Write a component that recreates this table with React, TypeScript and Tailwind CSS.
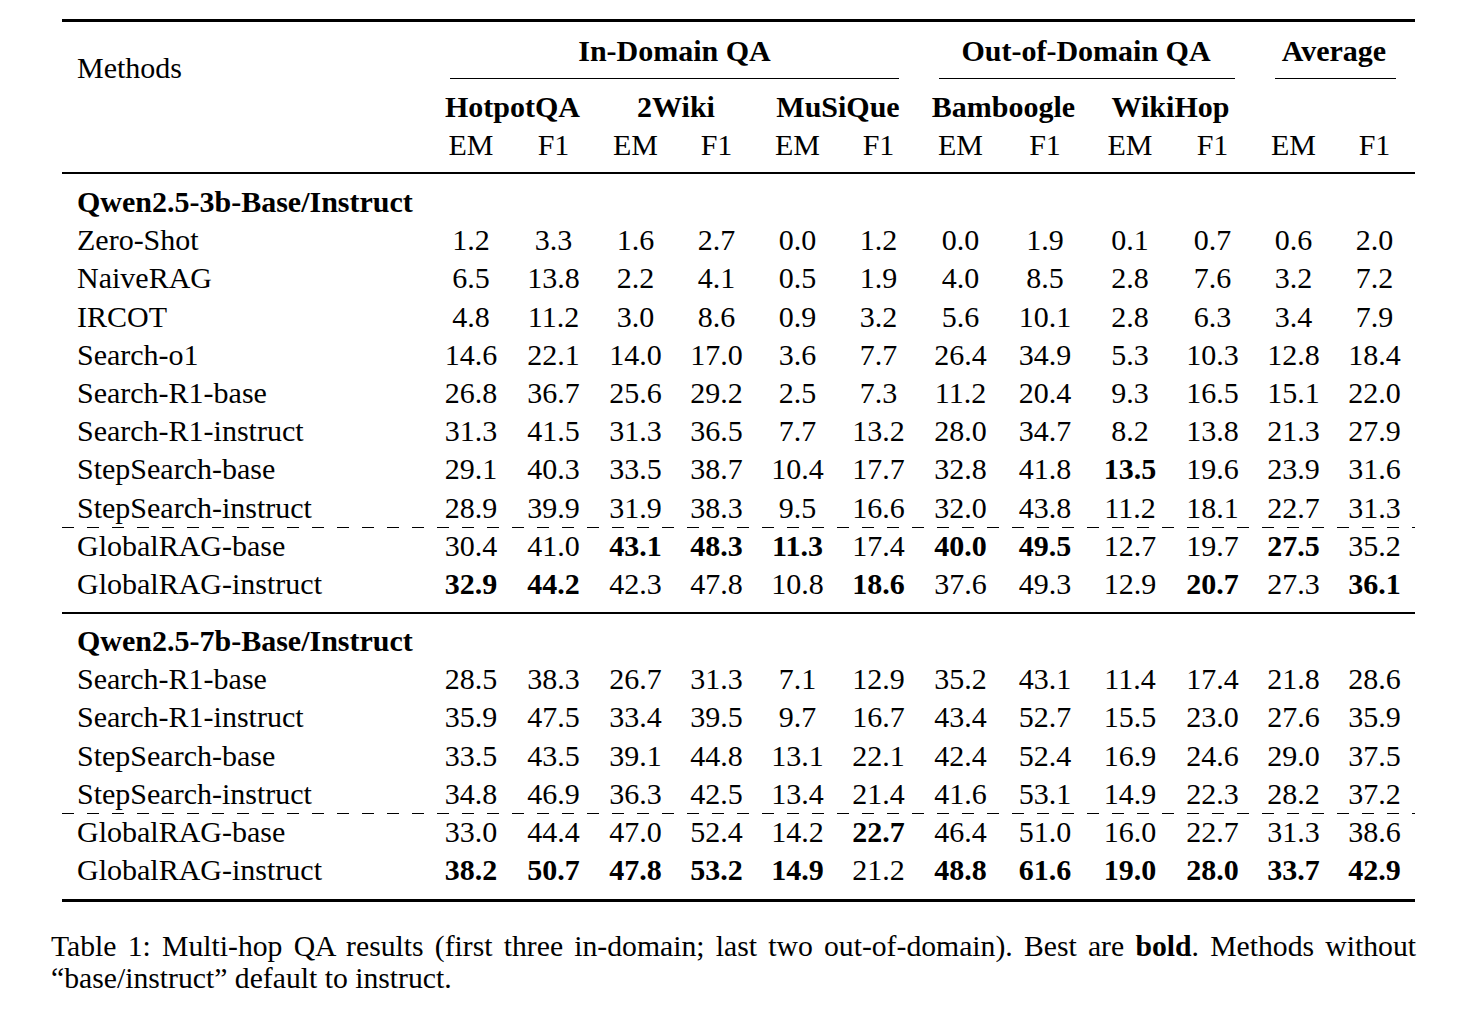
import React from 'react'

// 13 columns: method name + 12 metric columns
const COLS =
  'grid grid-cols-[368px_82px_83px_81px_81px_81px_81px_83px_86px_84px_81px_81px_81px]'

const START = [
  'col-start-2',
  'col-start-3',
  'col-start-4',
  'col-start-5',
  'col-start-6',
  'col-start-7',
  'col-start-8',
  'col-start-9',
  'col-start-10',
  'col-start-11',
  'col-start-12',
  'col-start-13',
]

type Row = { name: string; vals: string[] }

// values prefixed with * are bold
const small: Row[] = [
  { name: 'Zero-Shot', vals: ['1.2', '3.3', '1.6', '2.7', '0.0', '1.2', '0.0', '1.9', '0.1', '0.7', '0.6', '2.0'] },
  { name: 'NaiveRAG', vals: ['6.5', '13.8', '2.2', '4.1', '0.5', '1.9', '4.0', '8.5', '2.8', '7.6', '3.2', '7.2'] },
  { name: 'IRCOT', vals: ['4.8', '11.2', '3.0', '8.6', '0.9', '3.2', '5.6', '10.1', '2.8', '6.3', '3.4', '7.9'] },
  { name: 'Search-o1', vals: ['14.6', '22.1', '14.0', '17.0', '3.6', '7.7', '26.4', '34.9', '5.3', '10.3', '12.8', '18.4'] },
  { name: 'Search-R1-base', vals: ['26.8', '36.7', '25.6', '29.2', '2.5', '7.3', '11.2', '20.4', '9.3', '16.5', '15.1', '22.0'] },
  { name: 'Search-R1-instruct', vals: ['31.3', '41.5', '31.3', '36.5', '7.7', '13.2', '28.0', '34.7', '8.2', '13.8', '21.3', '27.9'] },
  { name: 'StepSearch-base', vals: ['29.1', '40.3', '33.5', '38.7', '10.4', '17.7', '32.8', '41.8', '*13.5', '19.6', '23.9', '31.6'] },
  { name: 'StepSearch-instruct', vals: ['28.9', '39.9', '31.9', '38.3', '9.5', '16.6', '32.0', '43.8', '11.2', '18.1', '22.7', '31.3'] },
]
const smallOurs: Row[] = [
  { name: 'GlobalRAG-base', vals: ['30.4', '41.0', '*43.1', '*48.3', '*11.3', '17.4', '*40.0', '*49.5', '12.7', '19.7', '*27.5', '35.2'] },
  { name: 'GlobalRAG-instruct', vals: ['*32.9', '*44.2', '42.3', '47.8', '10.8', '*18.6', '37.6', '49.3', '12.9', '*20.7', '27.3', '*36.1'] },
]
const big: Row[] = [
  { name: 'Search-R1-base', vals: ['28.5', '38.3', '26.7', '31.3', '7.1', '12.9', '35.2', '43.1', '11.4', '17.4', '21.8', '28.6'] },
  { name: 'Search-R1-instruct', vals: ['35.9', '47.5', '33.4', '39.5', '9.7', '16.7', '43.4', '52.7', '15.5', '23.0', '27.6', '35.9'] },
  { name: 'StepSearch-base', vals: ['33.5', '43.5', '39.1', '44.8', '13.1', '22.1', '42.4', '52.4', '16.9', '24.6', '29.0', '37.5'] },
  { name: 'StepSearch-instruct', vals: ['34.8', '46.9', '36.3', '42.5', '13.4', '21.4', '41.6', '53.1', '14.9', '22.3', '28.2', '37.2'] },
]
const bigOurs: Row[] = [
  { name: 'GlobalRAG-base', vals: ['33.0', '44.4', '47.0', '52.4', '14.2', '*22.7', '46.4', '51.0', '16.0', '22.7', '31.3', '38.6'] },
  { name: 'GlobalRAG-instruct', vals: ['*38.2', '*50.7', '*47.8', '*53.2', '*14.9', '21.2', '*48.8', '*61.6', '*19.0', '*28.0', '*33.7', '*42.9'] },
]

function DataRow({ row }: { row: Row }) {
  return (
    <div className={COLS + ' h-[38.2px] leading-[38.2px]'}>
      <div className="pl-[15px] whitespace-nowrap">{row.name}</div>
      {row.vals.map((v, i) =>
        v.startsWith('*') ? (
          <div className="text-center font-bold" key={i}>
            {v.slice(1)}
          </div>
        ) : (
          <div className="text-center" key={i}>
            {v}
          </div>
        )
      )}
    </div>
  )
}

function Dashed() {
  return (
    <div className="h-0">
      <div className="h-px bg-[image:repeating-linear-gradient(90deg,#000_0_12px,transparent_12px_25px)]" />
    </div>
  )
}

function Group({ title, rows, ours }: { title: string; rows: Row[]; ours: Row[] }) {
  return (
    <div>
      <div className="h-[38.2px] pl-[15px] leading-[38.2px] font-bold whitespace-nowrap">{title}</div>
      {rows.map(r => (
        <DataRow key={r.name} row={r} />
      ))}
      <Dashed />
      {ours.map(r => (
        <DataRow key={r.name} row={r} />
      ))}
    </div>
  )
}

export default function App() {
  const metrics = ['EM', 'F1', 'EM', 'F1', 'EM', 'F1', 'EM', 'F1', 'EM', 'F1', 'EM', 'F1']

  return (
    <div className="h-[1032px] w-[1469px] overflow-hidden bg-white font-['Liberation_Serif','Times_New_Roman',serif] text-black">
      <div className="ml-[62px] w-[1353px] pt-[19px] text-[30px]">
        <div className="h-[3px] bg-black" />

        {/* header */}
        <div className={COLS + ' grid-rows-[10px_38px_8px_1px_8px_39px_38px_8px]'}>
          <div className="col-start-1 row-span-5 row-start-2 pt-[17px] pl-[15px] leading-[38px]">Methods</div>

          <div className="col-span-6 col-start-2 row-start-2 text-center leading-[38px] font-bold">In-Domain QA</div>
          <div className="col-span-4 col-start-8 row-start-2 text-center leading-[38px] font-bold">Out-of-Domain QA</div>
          <div className="col-span-2 col-start-12 row-start-2 text-center leading-[38px] font-bold">Average</div>

          <div className="col-span-6 col-start-2 row-start-4 mx-[20px] bg-black" />
          <div className="col-span-4 col-start-8 row-start-4 ml-[20px] mr-[18px] bg-black" />
          <div className="col-span-2 col-start-12 row-start-4 ml-[22px] mr-[19px] bg-black" />

          <div className="col-span-2 col-start-2 row-start-6 text-center leading-[39px] font-bold">HotpotQA</div>
          <div className="col-span-2 col-start-4 row-start-6 text-center leading-[39px] font-bold">2Wiki</div>
          <div className="col-span-2 col-start-6 row-start-6 text-center leading-[39px] font-bold">MuSiQue</div>
          <div className="col-span-2 col-start-8 row-start-6 text-center leading-[39px] font-bold">Bamboogle</div>
          <div className="col-span-2 col-start-10 row-start-6 text-center leading-[39px] font-bold">WikiHop</div>

          {metrics.map((m, i) => (
            <div className={START[i] + ' row-start-7 text-center leading-[38px]'} key={i}>
              {m}
            </div>
          ))}
        </div>

        <div className="h-[2px] bg-black" />
        <div className="h-[9px]" />
        <Group ours={smallOurs} rows={small} title="Qwen2.5-3b-Base/Instruct" />

        <div className="mt-[9px] mb-[8px] h-[2px] bg-black" />
        <Group ours={bigOurs} rows={big} title="Qwen2.5-7b-Base/Instruct" />

        <div className="mt-[10px] h-[3px] bg-black" />
      </div>

      {/* caption */}
      <div className="mt-[29px] ml-[51px] w-[1365px] text-[29.7px] leading-[31.7px]">
        <div className="text-justify whitespace-nowrap [text-align-last:justify]">
          Table 1: Multi-hop QA results (first three in-domain; last two out-of-domain). Best are{' '}
          <span className="font-bold">bold</span>. Methods without
        </div>
        <div>“base/instruct” default to instruct.</div>
      </div>
    </div>
  )
}
